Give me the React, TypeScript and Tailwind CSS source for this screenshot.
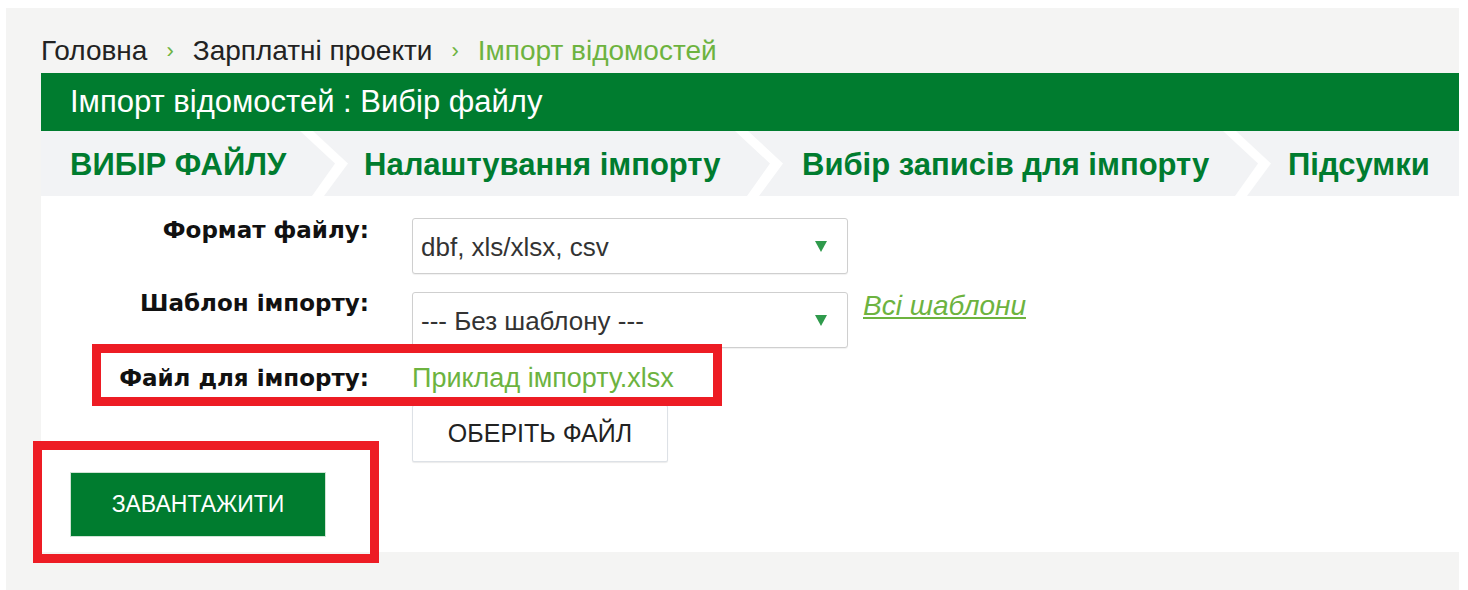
import React from "react";

const SANS = { fontFamily: "'Liberation Sans', Arial, sans-serif" };
const LABEL = { fontFamily: "'DejaVu Sans', Verdana, sans-serif" };

function Chevron() {
  return (
    <svg width="48" height="65" viewBox="0 0 48 65" className="shrink-0 block">
      <polygon points="0,0 13,0 48,32.5 24,65 12,65 35,32.5" fill="#ffffff" />
    </svg>
  );
}

function Caret() {
  return (
    <svg width="12" height="11" viewBox="0 0 12 11" className="block">
      <polygon points="0,0 12,0 6,11" fill="#2f9a4c" />
    </svg>
  );
}

function Select({ value }: { value: string }) {
  return (
    <div className="w-[436px] h-[56px] border border-[#cfcfcf] rounded-[3px] bg-white flex items-center pl-[8px] pr-[20px] shadow-[0_1px_1px_rgba(0,0,0,0.06)]">
      <span className="flex-1 text-[26px] text-[#333] leading-none mt-[2px]">{value}</span>
      <Caret />
    </div>
  );
}

function Crumb() {
  return <span className="mx-[19px] text-[#6db33f] text-[22px]">›</span>;
}

export default function App() {
  return (
    <div className="relative w-[1468px] h-[590px] bg-white overflow-hidden" style={SANS}>
      <div className="pt-[8px] pl-[6px]">
        <div className="w-[1453px] h-[582px] bg-[#f4f4f3] pl-[35px]">
          {/* breadcrumbs */}
          <div className="h-[65px] flex items-end pb-[3px] text-[28px] leading-[38px] text-[#222]">
            <span>Головна</span>
            <Crumb />
            <span>Зарплатні проекти</span>
            <Crumb />
            <span className="text-[#6db33f]">Імпорт відомостей</span>
          </div>

          {/* page title */}
          <div className="h-[58px] bg-[#007c2f] text-white text-[31px] pl-[29px] flex items-center">
            Імпорт відомостей : Вибір файлу
          </div>

          {/* wizard steps */}
          <div className="h-[65px] bg-[#f2f3f5] flex items-center text-[#007c2f] font-bold text-[31px]">
            <div className="w-[259px] pl-[29px] pt-[3px] whitespace-nowrap">ВИБІР ФАЙЛУ</div>
            <Chevron />
            <div className="w-[387px] pl-[16px] pt-[3px] whitespace-nowrap">Налаштування імпорту</div>
            <Chevron />
            <div className="w-[440px] pl-[19px] pt-[3px] whitespace-nowrap">Вибір записів для імпорту</div>
            <Chevron />
            <div className="flex-1 pl-[17px] pt-[3px] whitespace-nowrap">Підсумки</div>
          </div>

          {/* form */}
          <div className="h-[356px] bg-white">
            <div className="flex items-start pt-[22px]">
              <div className="w-[328px] text-right font-bold text-[23px] leading-[24px] text-[#111]" style={LABEL}>
                Формат файлу:
              </div>
              <div className="ml-[43px]">
                <Select value="dbf, xls/xlsx, csv" />
              </div>
            </div>

            <div className="flex items-start mt-[18px]">
              <div className="w-[328px] text-right font-bold text-[23px] leading-[22px] text-[#111]" style={LABEL}>
                Шаблон імпорту:
              </div>
              <div className="ml-[43px]">
                <Select value="--- Без шаблону ---" />
              </div>
              <a className="ml-[15px] text-[28px] leading-[28px] italic underline text-[#6db33f]">Всі шаблони</a>
            </div>

            <div className="flex items-center h-[30px] mt-[15px]">
              <div className="w-[328px] text-right font-bold text-[23px] text-[#111]" style={LABEL}>
                Файл для імпорту:
              </div>
              <div className="ml-[43px] text-[27px] text-[#6db33f]">Приклад імпорту.xlsx</div>
            </div>

            <div className="ml-[371px] mt-[12px] w-[256px] h-[57px] bg-white border border-[#dde1e6] rounded-[2px] shadow-[0_1px_1px_rgba(0,0,0,0.08)] flex items-center justify-center text-[25px] text-[#222]">
              ОБЕРІТЬ ФАЙЛ
            </div>

            <div className="ml-[29px] mt-[10px] w-[256px] h-[65px] bg-[#007c2f] border border-[#cfe3d4] flex items-center justify-center text-white text-[23px]">
              ЗАВАНТАЖИТИ
            </div>
          </div>
        </div>
      </div>

      {/* highlight frames */}
      <div className="absolute left-[92px] top-[344px] w-[630px] h-[62px] border-[9px] border-[#ed1c24]" />
      <div className="absolute left-[33px] top-[441px] w-[346px] h-[122px] border-[9px] border-[#ed1c24]" />
    </div>
  );
}
